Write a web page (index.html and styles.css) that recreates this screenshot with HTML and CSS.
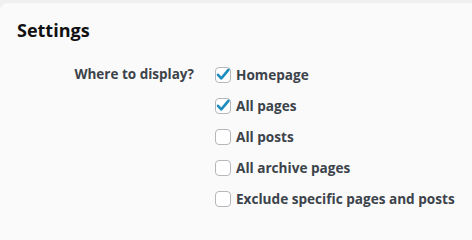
FILE: index.html
```html
<!DOCTYPE html>
<html>
<head>
<meta charset="utf-8">
<link rel="stylesheet" href="styles.css">
</head>
<body>
<div class="card">
  <h2 class="title">Settings</h2>
  <div class="field">
    <div class="field-label">Where to display?</div>
    <div class="options">
      <label class="option"><span class="box checked"><svg viewBox="0 0 16 16" width="16" height="16"><path d="M3 7.8 L6.3 11.4 L13.4 2.8" fill="none" stroke="#1e8cbe" stroke-width="2.6" stroke-linecap="round" stroke-linejoin="round"/></svg></span><span class="text">Homepage</span></label>
      <label class="option"><span class="box checked"><svg viewBox="0 0 16 16" width="16" height="16"><path d="M3 7.8 L6.3 11.4 L13.4 2.8" fill="none" stroke="#1e8cbe" stroke-width="2.6" stroke-linecap="round" stroke-linejoin="round"/></svg></span><span class="text">All pages</span></label>
      <label class="option"><span class="box"></span><span class="text">All posts</span></label>
      <label class="option"><span class="box"></span><span class="text">All archive pages</span></label>
      <label class="option"><span class="box"></span><span class="text">Exclude specific pages and posts</span></label>
    </div>
  </div>
</div>
</body>
</html>
```
FILE: styles.css
```css
html, body {
  margin: 0;
  padding: 0;
  background: #f0f0f0;
}
body {
  padding-top: 3px;
  box-sizing: border-box;
  min-height: 100vh;
  display: flex;
  flex-direction: column;
  font-family: "Open Sans", "Noto Sans", sans-serif;
}
.card {
  flex: 1;
  background: #fafafa;
  border-top-left-radius: 8px;
  padding: 15px 0 0 17px;
  box-sizing: border-box;
}
.title {
  margin: 0;
  font-size: 18px;
  font-weight: 700;
  color: #111;
  line-height: 24px;
}
.field {
  display: flex;
  margin-top: 20px;
}
.field-label {
  width: 177px;
  text-align: right;
  font-size: 13.5px;
  font-weight: 700;
  color: #3c434a;
  line-height: 22px;
  margin-top: 1px;
}
.options {
  display: flex;
  flex-direction: column;
  gap: 15px;
  margin-left: 21px;
  margin-top: 5px;
}
.option {
  display: flex;
  align-items: center;
  gap: 5px;
  height: 16px;
}
.box {
  width: 16px;
  height: 16px;
  flex: none;
  box-sizing: border-box;
  border: 1px solid #b4b7bb;
  border-radius: 4px;
  background: #fff;
  display: flex;
}
.box svg {
  margin: -1px;
  overflow: visible;
}
.text {
  font-size: 13.6px;
  font-weight: 700;
  color: #3c434a;
  line-height: 16px;
}
```
